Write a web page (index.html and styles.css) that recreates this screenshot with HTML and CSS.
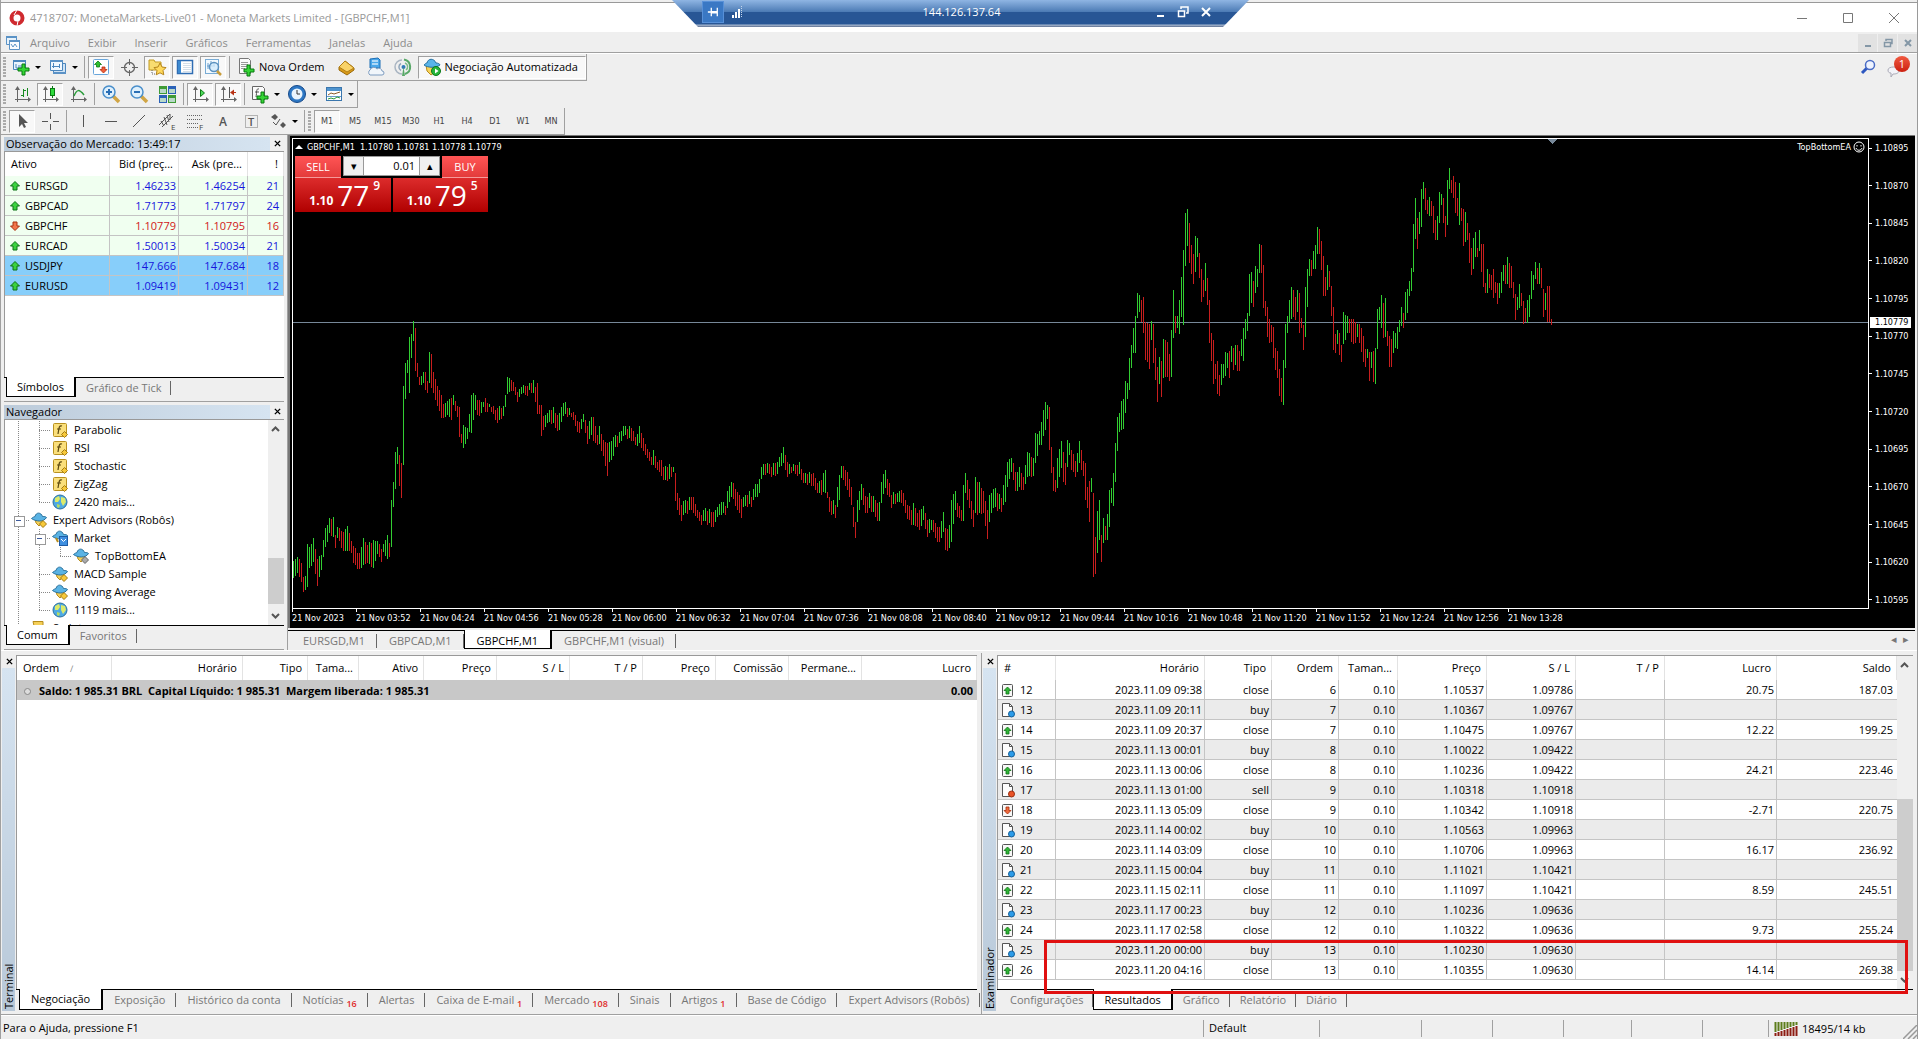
FILE: index.html
```html
<!DOCTYPE html>
<html lang="pt-BR">
<head>
<meta charset="UTF-8">
<meta name="viewport" content="width=device-width, initial-scale=1.0">
<title>4718707: MonetaMarkets-Live01 - Moneta Markets Limited - [GBPCHF,M1]</title>
<link rel="stylesheet" href="styles.css">
</head>
<body>
<svg class="sprite" aria-hidden="true">
<symbol id="i-newchart" viewBox="0 0 20 20"><path d="M2.500 3.500h12v9h-12z" fill="#eaf4fd" stroke="#4b86bd"/><path d="M2 3h13v2H2z" fill="#4b86bd"/><path d="M5 7v4h7M7 9h5" fill="none" stroke="#4b86bd"/><path d="M11 7h3v4h4v3h-4v4h-3v-4H7v-3h4z" fill="#35d435" stroke="#087a10"/></symbol>
<symbol id="i-profiles" viewBox="0 0 20 20"><path d="M5.500 6.500h12v10h-12z" fill="#cfe3f5" stroke="#4b86bd"/><path d="M2.500 3.500h12v10h-12z" fill="#f1f8fe" stroke="#4b86bd"/><path d="M2 3h13v2H2zM5 15h13v2H5z" fill="#5b92c6"/><path d="M5.500 6v5M4 9.500h8M11.500 7v4" stroke="#4b86bd"/></symbol>
<symbol id="i-watch" viewBox="0 0 20 20"><rect x="2.500" y="2.500" width="15" height="15" rx="1" fill="#fff" stroke="#69a6db"/><path d="M7 4l3.500 3.500H8.500V10h-3V7.500h-2z" fill="#2ec02e" stroke="#0b7a14" stroke-width=".8"/><path d="M12.500 16L9 12.500h2V10h3v2.500h2z" fill="#f0603a" stroke="#b32c10" stroke-width=".8"/></symbol>
<symbol id="i-target" viewBox="0 0 20 20"><circle cx="10.500" cy="10.500" r="5" fill="none" stroke="#666" stroke-width="1.300"/><path d="M10.500 2v6M10.500 13v6M2 10.500h6M13 10.500h6" stroke="#666"/></symbol>
<symbol id="i-favfolder" viewBox="0 0 20 20"><path d="M2 3h5l1 2h6v8H2z" fill="#f8dc70" stroke="#c19a22"/><path d="M5 13v4h4" fill="none" stroke="#666" stroke-dasharray="1 1"/><path d="M13 6l2 4 4 .6-3 3 .8 4.200-3.800-2-3.800 2 .8-4.200-3-3 4-.6z" fill="#ffd95c" stroke="#b5851a"/></symbol>
<symbol id="i-panel" viewBox="0 0 20 20"><rect x="2.500" y="3.500" width="15" height="13" fill="#fff" stroke="#2f6db3" stroke-width="1.500"/><path d="M3 4h3v12H3z" fill="#3d8ad0"/><path d="M8 6.500h8M8 8.500h8M8 10.500h8M8 12.500h8M8 14.500h8" stroke="#d5dfe8"/></symbol>
<symbol id="i-tester" viewBox="0 0 20 20"><rect x="2.500" y="2.500" width="13" height="14" fill="#f4fafe" stroke="#79acd5"/><path d="M5 6v6M4 9h8M8 4v5M11 5v4" stroke="#6a9fcc"/><circle cx="11" cy="10" r="4.500" fill="#d3ebfb" fill-opacity=".8" stroke="#5b91bf" stroke-width="1.500"/><path d="M14 14l4 4" stroke="#c99d3b" stroke-width="2.500"/></symbol>
<symbol id="i-order" viewBox="0 0 20 20"><path d="M3.500 1.500h9l2 2v13h-11z" fill="#fbfbfb" stroke="#777"/><path d="M5 5.500h7M5 7.500h7M5 9.500h7M5 11.500h4" stroke="#999"/><path d="M11 8h3v4h4v3h-4v4h-3v-4H8v-3h3z" fill="#35d435" stroke="#087a10"/></symbol>
<symbol id="i-gold" viewBox="0 0 20 20"><path d="M2 10l6-6 9 7v2l-7 5-8-5z" fill="#d99a18" stroke="#9a6a0a"/><path d="M2 10l6-6 9 7-7 4z" fill="#f9d368" stroke="#b27f16"/></symbol>
<symbol id="i-cloud" viewBox="0 0 20 20"><path d="M5 2l8-1 2 2v8H5z" fill="#4aa7ea" stroke="#1d6eb5"/><path d="M7 4h6M7 7h6" stroke="#cfe9fb" stroke-width="1.500"/><path d="M5 18a3 3 0 010-5 4 4 0 017-1 3 3 0 015 2 2 2 0 010 4z" fill="#f1f6fb" stroke="#7d9cc0"/></symbol>
<symbol id="i-signal" viewBox="0 0 20 20"><path d="M9 17a7 7 0 010-14" fill="none" stroke="#a9b5c2" stroke-width="1.500"/><path d="M8 13.500a4 4 0 010-7" fill="none" stroke="#8fa5ba" stroke-width="1.500"/><path d="M11 2.500a7.500 7.500 0 011 14.500" fill="none" stroke="#58a868" stroke-width="2"/><path d="M12 6a4 4 0 011 7" fill="none" stroke="#7dbb89" stroke-width="1.500"/><circle cx="10.500" cy="10" r="2" fill="#3079b9"/><path d="M10.500 10l1.500 9h-3z" fill="#58a868"/></symbol>
<symbol id="i-auto" viewBox="0 0 20 20"><path d="M4 8h11l-2 7-4 3-4-4z" fill="#f7d35c" stroke="#b78c1c"/><path d="M2 8c1-1 2-2 3-2 1-5 7-5 9 0 2 0 4 1 4 2-4 3-12 3-16 0z" fill="#58b4ea" stroke="#246f9f"/><circle cx="14" cy="14" r="4.500" fill="#27b53a" stroke="#0b7a1a"/><path d="M13 11.500l3.500 2.500-3.500 2.500z" fill="#fff"/></symbol>
<symbol id="i-bars" viewBox="0 0 20 20"><path d="M5.500 5v13M3 15.500h15" stroke="#666"/><path d="M5.500 2L3 6h5zM19 15.500L16 13v5z" fill="#666"/><path d="M11.500 5v8M9 11.500h2M12 6.500h2M15.500 4v8" stroke="#168a20"/></symbol>
<symbol id="i-candle" viewBox="0 0 20 20"><path d="M5.500 5v13M3 15.500h15" stroke="#666"/><path d="M5.500 2L3 6h5zM19 15.500L16 13v5z" fill="#666"/><path d="M12.500 2v12" stroke="#0b7a14"/><rect x="10.500" y="4.500" width="4" height="7" fill="#2edb3c" stroke="#0b7a14"/></symbol>
<symbol id="i-line" viewBox="0 0 20 20"><path d="M5.500 5v13M3 15.500h15" stroke="#666"/><path d="M5.500 2L3 6h5zM19 15.500L16 13v5z" fill="#666"/><path d="M6 12c3-7 5-7 10-1" fill="none" stroke="#2a9c3a" stroke-width="1.500"/></symbol>
<symbol id="i-zoomin" viewBox="0 0 20 20"><path d="M12 12l6 6" stroke="#d1a544" stroke-width="3.500"/><circle cx="8" cy="8" r="6" fill="#dff0fc" stroke="#4a8fcb" stroke-width="1.500"/><path d="M5 8h6M8 5v6" stroke="#2a6fb5" stroke-width="2"/></symbol>
<symbol id="i-zoomout" viewBox="0 0 20 20"><path d="M12 12l6 6" stroke="#d1a544" stroke-width="3.500"/><circle cx="8" cy="8" r="6" fill="#dff0fc" stroke="#4a8fcb" stroke-width="1.500"/><path d="M5 8h6" stroke="#2a6fb5" stroke-width="2"/></symbol>
<symbol id="i-tile" viewBox="0 0 20 20"><path d="M2 2h8v8H2zM11 11h8v8h-8z" fill="#3f9b35"/><path d="M11 2h8v8h-8zM2 11h8v8H2z" fill="#2b62b8"/><path d="M3 5h6v4H3zM12 5h6v4h-6zM3 14h6v4H3zM12 14h6v4h-6z" fill="#b9d9c9"/></symbol>
<symbol id="i-scroll" viewBox="0 0 20 20"><path d="M5.500 5v13M3 15.500h15" stroke="#666"/><path d="M5.500 2L3 6h5zM19 15.500L16 13v5z" fill="#666"/><path d="M10.500 5.500l4 3.500-4 3.500z" fill="#4ddb5a" stroke="#0b7a14"/></symbol>
<symbol id="i-shift" viewBox="0 0 20 20"><path d="M5.500 5v13M3 15.500h15" stroke="#666"/><path d="M5.500 2L3 6h5zM19 15.500L16 13v5z" fill="#666"/><path d="M11.500 3v11" stroke="#555"/><path d="M18 8.500h-3" stroke="#b83214"/><path d="M12 8.500l4-3v6z" fill="#b83214"/></symbol>
<symbol id="i-indic" viewBox="0 0 20 20"><path d="M2.500 2.500h10l2 2v11h-12z" fill="#fbfbfb" stroke="#666"/><path d="M9 5c-3-1-2 3-3 8M5 8h4" fill="none" stroke="#555"/><path d="M11 8h3v4h4v3h-4v4h-3v-4H7v-3h4z" fill="#35d435" stroke="#087a10"/></symbol>
<symbol id="i-clock" viewBox="0 0 20 20"><circle cx="10" cy="10" r="8.500" fill="#2d77c4" stroke="#174a8a"/><circle cx="10" cy="10" r="5.500" fill="#e9f4fd"/><path d="M10 6v4h3" fill="none" stroke="#333"/></symbol>
<symbol id="i-template" viewBox="0 0 20 20"><rect x="2.500" y="3.500" width="15" height="13" fill="#fff" stroke="#3a76ad"/><path d="M3 4h14v3H3z" fill="#4f94cf"/><path d="M4 11l3-2 3 1 3-1 3-1" fill="none" stroke="#8a5a2a"/><path d="M3 12.500h14" stroke="#6b9dc8"/><path d="M4 15l3-1 3 1 3-2 3 1" fill="none" stroke="#2a9c3a"/></symbol>
<symbol id="i-pointer" viewBox="0 0 20 20"><path d="M7 3v13l3-3 2 4 2-1-2-4h4z" fill="#555"/></symbol>
<symbol id="i-cross" viewBox="0 0 20 20"><path d="M10.500 2v6M10.500 13v6M2 10.500h6M13 10.500h6" stroke="#555"/></symbol>
<symbol id="i-vline" viewBox="0 0 20 20"><path d="M10.500 4v12" stroke="#555"/></symbol>
<symbol id="i-hline" viewBox="0 0 20 20"><path d="M4 10.500h12" stroke="#555"/></symbol>
<symbol id="i-trend" viewBox="0 0 20 20"><path d="M4 16L16 4" stroke="#555"/></symbol>
<symbol id="i-channel" viewBox="0 0 20 20"><path d="M2 14L13 3M5 16L16 5M4 10l3 5M7 6l3 8M10 4l2 7M13 3v6" stroke="#555" fill="none"/><text x="14" y="19" font-size="8" font-family="Open Sans" fill="#444">E</text></symbol>
<symbol id="i-fibo" viewBox="0 0 20 20"><path d="M2 4.500h16M2 8.500h16M2 12.500h11M2 16.500h11" stroke="#666" stroke-dasharray="1 1"/><text x="14" y="19" font-size="8" font-family="Open Sans" fill="#444">F</text></symbol>
<symbol id="i-text" viewBox="0 0 20 20"><text x="6" y="15" font-size="12" font-family="Open Sans" font-weight="600" fill="#555">A</text></symbol>
<symbol id="i-label" viewBox="0 0 20 20"><path d="M4.500 4.500h12v12h-12z" fill="none" stroke="#777" stroke-dasharray="1 1"/><text x="7" y="15" font-size="11" font-family="Open Sans" font-weight="600" fill="#555">T</text></symbol>
<symbol id="i-arrows" viewBox="0 0 20 20"><path d="M3 6l4-3 3 3-3 3zM12 14l3-3 3 3-3 3z" fill="#555"/><path d="M5 11l3 3 4-6" fill="none" stroke="#555"/></symbol>
<symbol id="i-up" viewBox="0 0 12 12"><path d="M6 1.500l4.500 4.500H8v4H4V6H1.500z" fill="#3bd13f" stroke="#0b7314"/></symbol>
<symbol id="i-down" viewBox="0 0 12 12"><path d="M6 10.500L1.500 6H4V2h4v4h2.500z" fill="#f2764a" stroke="#a8300f"/></symbol>
<symbol id="i-func" viewBox="0 0 16 16"><rect x="1.500" y="1.500" width="13" height="13" rx="1" fill="#fadf7b" stroke="#b9911f"/><path d="M10 4c-3-1-3 2-4 8M5 7h4" fill="none" stroke="#5d4a10" stroke-width="1.200"/><path d="M12.500 9.500L15.500 12.500 12.500 15.500 9.500 12.500z" fill="#f7c93a" stroke="#a47b12"/></symbol>
<symbol id="i-globe" viewBox="0 0 16 16"><circle cx="8" cy="8" r="7" fill="#4ea9e2" stroke="#2a6f9e"/><path d="M3 4l4-2 1 3-2 3H3zM9 3l4 1 1 4-3 4-2-4z" fill="#dcea6a"/><path d="M5 10l3 1-1 3-2-1z" fill="#b5dd60"/></symbol>
<symbol id="i-expert" viewBox="0 0 16 16"><path d="M4 7h8l-1 4-3 3-3-3z" fill="#f4cf58" stroke="#b78c1c"/><path d="M0.500 6.500C2 5 3 5 4 4.500 5 0 10 0 11.500 4.500c2 0 3 0 4 1-3 5-11 4-15 1z" fill="#5ab3e4" stroke="#27709c"/><path d="M12 8.500l3.500 3.500-3.500 3.500L8.500 12z" fill="#f7c93a" stroke="#a47b12"/></symbol>
<symbol id="i-expertgray" viewBox="0 0 16 16"><path d="M4 7h8l-1 4-3 3-3-3z" fill="#f4cf58" stroke="#b78c1c"/><path d="M0.500 6.500C2 5 3 5 4 4.500 5 0 10 0 11.500 4.500c2 0 3 0 4 1-3 5-11 4-15 1z" fill="#5ab3e4" stroke="#27709c"/><path d="M12 8.500l3.500 3.500-3.500 3.500L8.500 12z" fill="#aaa" stroke="#666"/></symbol>
<symbol id="i-market" viewBox="0 0 16 16"><path d="M0.500 6.500C2 5 3 5 4 4.500 5 0 10 0 11.500 4.500c2 0 3 0 4 1-3 5-11 4-15 1z" fill="#5ab3e4" stroke="#27709c"/><path d="M4 8l2 4" stroke="#b78c1c" stroke-width="2"/><rect x="7.500" y="6.500" width="8" height="9" fill="#3f8fe0" stroke="#1d5ba5"/><path d="M9 9l2.500 2.500L14 9" fill="none" stroke="#fff"/></symbol>
<symbol id="i-script" viewBox="0 0 16 16"><path d="M2 1.500h10v4l2 9H5z" fill="#f4cf58" stroke="#b78c1c"/></symbol>
<symbol id="i-close-up" viewBox="0 0 14 16"><rect x="1.500" y="2.500" width="10" height="12" rx="1" fill="#f8f8f8" stroke="#555"/><path d="M6.500 5l3.500 3.500H8V12H5V8.500H3z" fill="#31b436" stroke="#0b7314" stroke-width=".8"/></symbol>
<symbol id="i-close-down" viewBox="0 0 14 16"><rect x="1.500" y="2.500" width="10" height="12" rx="1" fill="#f8f8f8" stroke="#555"/><path d="M6.500 12L3 8.500h2V5h3v3.500h2z" fill="#ef6a3c" stroke="#a8300f" stroke-width=".8"/></symbol>
<symbol id="i-buy" viewBox="0 0 14 16"><path d="M1.500 1.500h7l3 3v10h-10z" fill="#fdfdfd" stroke="#555"/><path d="M8.500 1.500v3h3" fill="none" stroke="#555"/><circle cx="10.500" cy="12" r="3" fill="#2c9be8" stroke="#14629c"/></symbol>
<symbol id="i-sell" viewBox="0 0 14 16"><path d="M1.500 1.500h7l3 3v10h-10z" fill="#fdfdfd" stroke="#555"/><path d="M8.500 1.500v3h3" fill="none" stroke="#555"/><circle cx="10.500" cy="12" r="3" fill="#ea5326" stroke="#9c2f10"/></symbol>
<symbol id="i-chev-up" viewBox="0 0 15 15"><path d="M4 9.500L7.500 6 11 9.500" fill="none" stroke="#555" stroke-width="2"/></symbol>
<symbol id="i-chev-down" viewBox="0 0 15 15"><path d="M4 5.500L7.500 9 11 5.500" fill="none" stroke="#555" stroke-width="2"/></symbol>
<symbol id="i-x" viewBox="0 0 8 8"><path d="M1 1l6 6M7 1L1 7" stroke="#000" stroke-width="1.600"/></symbol>
</svg>

<div class="window">
<header class="titlebar">
<svg class="logo" viewBox="0 0 16 16"><circle cx="8" cy="8" r="5.500" fill="none" stroke="#cf2a2f" stroke-width="4"/><path d="M8 0l-3 5M9 11l-1 5" stroke="#fff" stroke-width="1"/></svg>
<h1>4718707: MonetaMarkets-Live01 - Moneta Markets Limited - [GBPCHF,M1]</h1>
<div class="win-buttons">
<button aria-label="Minimizar"><svg viewBox="0 0 12 12"><path d="M1 6.500h10" stroke="#777"/></svg></button>
<button aria-label="Maximizar"><svg viewBox="0 0 12 12"><path d="M1.500 1.500h9v9h-9z" fill="none" stroke="#777"/></svg></button>
<button aria-label="Fechar"><svg viewBox="0 0 12 12"><path d="M1 1l10 10M11 1L1 11" stroke="#777"/></svg></button>
</div>
</header>

<div class="remote-bar">
<button class="pin" aria-label="Fixar"><svg viewBox="0 0 14 12"><path d="M1 6h4M5 1v10M12 1v10M5 5.500h7M5 7h7" stroke="#fff" stroke-width="1.500"/></svg></button>
<svg class="strength" viewBox="0 0 12 12"><path d="M1 9h2v3H1zM4 6h2v6H4zM7 3h2v9H7z" fill="#fff"/><path d="M10.500 0v12" stroke="#c5d5ea" stroke-dasharray="1 1"/></svg>
<span>144.126.137.64</span>
<div class="remote-buttons">
<button aria-label="Minimizar sessão"><svg viewBox="0 0 12 12"><path d="M3 10h7" stroke="#fff" stroke-width="2"/></svg></button>
<button aria-label="Restaurar sessão"><svg viewBox="0 0 12 12"><path d="M4 3V1h7v6H9M1.500 5h6v5.500h-6z" fill="none" stroke="#fff" stroke-width="1.500"/></svg></button>
<button aria-label="Fechar sessão"><svg viewBox="0 0 12 12"><path d="M2 2l8 8M10 2l-8 8" stroke="#fff" stroke-width="2"/></svg></button>
</div>
</div>

<nav class="menubar">
<svg class="menu-icon" viewBox="0 0 16 16"><path d="M1.500 1.500h10v8h-10z" fill="#e9f3fb" stroke="#5b93c6"/><path d="M4.500 5.500h10v9h-10z" fill="#f8fcff" stroke="#5b93c6"/><path d="M1 1h11v2H1zM4 5h11v2H4z" fill="#5b93c6"/><path d="M6 9l2 3 2-3 2 3" fill="none" stroke="#5b93c6"/></svg>
<button>Arquivo</button><button>Exibir</button><button>Inserir</button><button>Gráficos</button><button>Ferramentas</button><button>Janelas</button><button>Ajuda</button>
<div class="child-buttons">
<button aria-label="Minimizar gráfico"><svg viewBox="0 0 10 10"><path d="M2 8h6" stroke="#8497a6" stroke-width="2"/></svg></button>
<button aria-label="Restaurar gráfico"><svg viewBox="0 0 10 10"><path d="M3 3V1.500h6v4H7.500M1.500 4.500h6v4h-6z" fill="none" stroke="#8497a6" stroke-width="1.500"/></svg></button>
<button aria-label="Fechar gráfico"><svg viewBox="0 0 10 10"><path d="M2 2l6 6M8 2L2 8" stroke="#8497a6" stroke-width="2"/></svg></button>
</div>
</nav>

<div class="toolbars">
<div class="toolbar-stack">
<div class="toolbar">
<i class="grip"></i>
<button class="drop" aria-label="Novo gráfico"><svg><use href="#i-newchart"/></svg></button>
<button class="drop" aria-label="Perfis"><svg><use href="#i-profiles"/></svg></button>
<i class="sep"></i>
<button class="on" aria-label="Observação do Mercado"><svg><use href="#i-watch"/></svg></button>
<button aria-label="Janela de dados"><svg><use href="#i-target"/></svg></button>
<button class="on" aria-label="Navegador"><svg><use href="#i-favfolder"/></svg></button>
<button class="on" aria-label="Terminal"><svg><use href="#i-panel"/></svg></button>
<button class="on" aria-label="Testador"><svg><use href="#i-tester"/></svg></button>
<i class="sep"></i>
<button class="wide"><svg><use href="#i-order"/></svg>Nova Ordem</button>
<button aria-label="MetaEditor"><svg><use href="#i-gold"/></svg></button>
<button aria-label="VPS"><svg><use href="#i-cloud"/></svg></button>
<button aria-label="Sinais"><svg><use href="#i-signal"/></svg></button>
<button class="wide on"><svg><use href="#i-auto"/></svg>Negociação Automatizada</button>
</div>
<div class="toolbar">
<i class="grip"></i>
<button aria-label="Barras"><svg><use href="#i-bars"/></svg></button>
<button class="on" aria-label="Candles"><svg><use href="#i-candle"/></svg></button>
<button aria-label="Linha"><svg><use href="#i-line"/></svg></button>
<i class="sep"></i>
<button aria-label="Mais zoom"><svg><use href="#i-zoomin"/></svg></button>
<button aria-label="Menos zoom"><svg><use href="#i-zoomout"/></svg></button>
<button aria-label="Lado a lado"><svg><use href="#i-tile"/></svg></button>
<i class="sep"></i>
<button class="on" aria-label="Rolagem automática"><svg><use href="#i-scroll"/></svg></button>
<button class="on" aria-label="Deslocar gráfico"><svg><use href="#i-shift"/></svg></button>
<i class="sep"></i>
<button class="drop" aria-label="Indicadores"><svg><use href="#i-indic"/></svg></button>
<button class="drop" aria-label="Períodos"><svg><use href="#i-clock"/></svg></button>
<button class="drop" aria-label="Modelos"><svg><use href="#i-template"/></svg></button>
</div>
<div class="toolbar">
<i class="grip"></i>
<button class="on" aria-label="Cursor"><svg><use href="#i-pointer"/></svg></button>
<button aria-label="Mira"><svg><use href="#i-cross"/></svg></button>
<i class="sep"></i>
<button aria-label="Linha vertical"><svg><use href="#i-vline"/></svg></button>
<button aria-label="Linha horizontal"><svg><use href="#i-hline"/></svg></button>
<button aria-label="Linha de tendência"><svg><use href="#i-trend"/></svg></button>
<button aria-label="Canal"><svg><use href="#i-channel"/></svg></button>
<button aria-label="Fibonacci"><svg><use href="#i-fibo"/></svg></button>
<button aria-label="Texto"><svg><use href="#i-text"/></svg></button>
<button aria-label="Etiqueta"><svg><use href="#i-label"/></svg></button>
<button class="drop" aria-label="Setas"><svg><use href="#i-arrows"/></svg></button>
<i class="sep"></i>
<i class="grip"></i>
<button class="tf on">M1</button><button class="tf">M5</button><button class="tf">M15</button><button class="tf">M30</button><button class="tf">H1</button><button class="tf">H4</button><button class="tf">D1</button><button class="tf">W1</button><button class="tf">MN</button>
</div>
</div>
<div class="toolbar-right">
<button aria-label="Pesquisar"><svg viewBox="0 0 16 16"><path d="M2 14l5-5" stroke="#2d57c0" stroke-width="3"/><circle cx="10" cy="6" r="4.500" fill="#eef3ff" stroke="#4a6cc5" stroke-width="1.500"/></svg></button>
<button class="alerts" aria-label="Notificações"><svg viewBox="0 0 16 16"><path d="M2 8c0-4 11-4 11 0s-4 4-6 4l-2 3v-4c-2 0-3-1-3-3z" fill="#f3f3f8" stroke="#a9a9b5"/></svg><b>1</b></button>
</div>
</div>

<main class="workspace">
<aside class="dock">
<section class="panel">
<div class="panel-title"><h2>Observação do Mercado: 13:49:17</h2><button aria-label="Fechar"><svg><use href="#i-x"/></svg></button></div>
<div class="panel-body">
<table class="quotes">
<colgroup><col class="c-symbol"><col class="c-price"><col class="c-price"><col></colgroup>
<thead><tr><th>Ativo</th><th>Bid (preç...</th><th>Ask (pre...</th><th>!</th></tr></thead>
<tbody id="quotes"></tbody>
</table>
</div>
<div class="tabs"><button class="active">Símbolos</button><button>Gráfico de Tick</button></div>
</section>
<section class="panel nav-panel">
<div class="panel-title"><h2>Navegador</h2><button aria-label="Fechar"><svg><use href="#i-x"/></svg></button></div>
<div class="panel-body tree-body">
<ul class="tree">
<li><i class="v"></i><i class="t"></i><svg><use href="#i-func"/></svg>Parabolic</li>
<li><i class="v"></i><i class="t"></i><svg><use href="#i-func"/></svg>RSI</li>
<li><i class="v"></i><i class="t"></i><svg><use href="#i-func"/></svg>Stochastic</li>
<li><i class="v"></i><i class="t"></i><svg><use href="#i-func"/></svg>ZigZag</li>
<li><i class="v"></i><i class="l"></i><svg><use href="#i-globe"/></svg>2420 mais...</li>
<li><i class="t box"></i><svg><use href="#i-expert"/></svg>Expert Advisors (Robôs)</li>
<li><i class="v"></i><i class="t box"></i><svg><use href="#i-market"/></svg>Market</li>
<li><i class="v"></i><i class="v"></i><i class="l"></i><svg><use href="#i-expertgray"/></svg>TopBottomEA</li>
<li><i class="v"></i><i class="t"></i><svg><use href="#i-expert"/></svg>MACD Sample</li>
<li><i class="v"></i><i class="t"></i><svg><use href="#i-expert"/></svg>Moving Average</li>
<li><i class="v"></i><i class="l"></i><svg><use href="#i-globe"/></svg>1119 mais...</li>
<li><i class="v"></i><svg><use href="#i-script"/></svg>Scripts</li>
</ul>
<div class="scrollbar"><svg><use href="#i-chev-up"/></svg><div class="track nav-track"><div class="thumb"></div></div><svg><use href="#i-chev-down"/></svg></div>
</div>
<div class="tabs"><button class="active">Comum</button><button>Favoritos</button></div>
</section>
</aside>

<section class="chart-area">
<div class="chart">
<div class="chart-main">
<div class="plot">
<svg id="candles"></svg>
<p class="chart-title">GBPCHF,M1&nbsp; 1.10780 1.10781 1.10778 1.10779</p>
<p class="chart-ea">TopBottomEA <svg viewBox="0 0 12 12"><circle cx="6" cy="6" r="5" fill="none" stroke="#fff"/><path d="M4 4v1.500M8 4v1.500M3 7c1 3 5 3 6 0" fill="none" stroke="#fff"/></svg></p>
<div class="trade">
<div class="trade-top">
<button class="side">SELL</button>
<div class="spin"><button aria-label="Diminuir volume">▾</button><input type="text" aria-label="Volume" value="0.01"><button aria-label="Aumentar volume">▴</button></div>
<button class="side">BUY</button>
</div>
<div class="trade-prices">
<button><b>1.10</b><span>77</span><sup>9</sup></button>
<button><b>1.10</b><span>79</span><sup>5</sup></button>
</div>
</div>
</div>
<div class="price-axis">
<div class="prices"><span>1.10895</span><span>1.10870</span><span>1.10845</span><span>1.10820</span><span>1.10795</span><span>1.10770</span><span>1.10745</span><span>1.10720</span><span>1.10695</span><span>1.10670</span><span>1.10645</span><span>1.10620</span><span>1.10595</span></div>
<div class="current">1.10779</div>
</div>
</div>
<div class="time-axis" id="times"></div>
</div>
<div class="tabs chart-tabs"><button>EURSGD,M1</button><button>GBPCAD,M1</button><button class="active">GBPCHF,M1</button><button>GBPCHF,M1 (visual)</button><span class="tab-scroll">◂ &nbsp;▸</span></div>
</section>
</main>

<div class="bottom">
<section class="strip-panel terminal">
<div class="strip"><button aria-label="Fechar Terminal"><svg><use href="#i-x"/></svg></button><h2>Terminal</h2></div>
<div class="strip-content">
<div class="panel-body">
<table class="grid orders">
<colgroup><col class="w95"><col class="w131"><col class="w65"><col class="w51"><col class="w65"><col class="w73"><col class="w73"><col class="w73"><col class="w73"><col class="w73"><col class="w73"><col></colgroup>
<thead><tr><th class="left">Ordem <small>∕</small></th><th>Horário</th><th>Tipo</th><th>Tama...</th><th>Ativo</th><th>Preço</th><th>S / L</th><th>T / P</th><th>Preço</th><th>Comissão</th><th>Permane...</th><th>Lucro</th></tr></thead>
<tbody><tr class="balance"><td colspan="11"><i class="dot"></i>Saldo: 1 985.31 BRL&nbsp; Capital Líquido: 1 985.31&nbsp; Margem liberada: 1 985.31</td><td>0.00</td></tr></tbody>
</table>
</div>
<div class="tabs"><button class="active">Negociação</button><button>Exposição</button><button>Histórico da conta</button><button>Notícias <small>16</small></button><button>Alertas</button><button>Caixa de E-mail <small>1</small></button><button>Mercado <small>108</small></button><button>Sinais</button><button>Artigos <small>1</small></button><button>Base de Código</button><button>Expert Advisors (Robôs)</button></div>
</div>
</section>
<section class="strip-panel tester">
<div class="strip"><button aria-label="Fechar Examinador"><svg><use href="#i-x"/></svg></button><h2>Examinador</h2></div>
<div class="strip-content">
<div class="panel-body tester-body">
<table class="grid results">
<colgroup><col class="w58"><col class="w149"><col class="w67"><col class="w67"><col class="w59"><col class="w89"><col class="w89"><col class="w89"><col class="w112"><col></colgroup>
<thead><tr><th class="left">#</th><th>Horário</th><th>Tipo</th><th>Ordem</th><th>Taman...</th><th>Preço</th><th>S / L</th><th>T / P</th><th>Lucro</th><th>Saldo</th></tr></thead>
<tbody id="results"></tbody>
</table>
<div class="scrollbar"><svg><use href="#i-chev-up"/></svg><div class="track tester-track"><div class="thumb"></div></div><svg><use href="#i-chev-down"/></svg></div>
</div>
<div class="tabs"><button>Configurações</button><button class="active">Resultados</button><button>Gráfico</button><button>Relatório</button><button>Diário</button></div>
</div>
<div class="highlight"></div>
</section>
</div>

<footer class="statusbar">
<span class="help">Para o Ajuda, pressione F1</span>
<span class="s116">Default</span><span class="s102"></span><span class="s71"></span><span class="s71"></span><span class="s68"></span><span class="s71"></span><span class="s66"></span>
<span class="traffic"><svg viewBox="0 0 24 14"><path d="M1.500 0v10M4.500 0v9M7.500 0v8M10.500 0v7M13.500 0v6M16.500 0v5M19.500 0v4M22.500 0v3" stroke="#5d7d1c" stroke-width="2"/><path d="M1.500 11v3M4.500 10v4M7.500 9v5M10.500 8v6M13.500 7v7M16.500 6v8M19.500 5v9M22.500 4v10" stroke="#8d1c12" stroke-width="2"/></svg>18495/14 kb</span>
<svg class="resize" viewBox="0 0 14 14"><path d="M0 14L14 0M5 14l9-9M10 14l4-4" stroke="#999" stroke-width="1.500"/></svg>
</footer>
</div>
<script src="script.js"></script>
</body>
</html>
```
FILE: styles.css
```css
* {
box-sizing: border-box;
}
body {
margin: 0;
height: 100vh;
overflow: hidden;
background: #fff;
color: #000;
font-family: "Open Sans", "Noto Sans", sans-serif;
font-size: 11px;
line-height: 16px;
}
h1, h2, p, ul {
margin: 0;
padding: 0;
font-size: 11px;
font-weight: normal;
}
button {
border: none;
padding: 0;
background: none;
color: inherit;
font: inherit;
}
svg {
display: block;
flex: none;
}
.sprite {
position: absolute;
width: 0;
height: 0;
}
.window {
position: relative;
display: flex;
flex-direction: column;
height: 100vh;
padding-top: 2px;
margin-right: 1px;
border-right: 1px solid #9a9a9a;
border-left: 1px solid #a0a0a0;
background: #efefef;
}

/* title and menu */
.titlebar {
display: flex;
align-items: center;
height: 30px;
flex: none;
padding-left: 8px;
border-top: 1px solid #999;
background: #fff;
color: #999;
}
.logo {
width: 16px;
height: 16px;
margin-right: 5px;
}
.win-buttons {
display: flex;
margin-left: auto;
}
.win-buttons button {
display: flex;
justify-content: center;
width: 46px;
}
.win-buttons svg {
width: 12px;
height: 12px;
}
.remote-bar {
position: absolute;
top: 0;
left: 671px;
width: 577px;
height: 27px;
display: flex;
align-items: center;
padding: 0 37px 3px 30px;
background: linear-gradient(#8fb5e3, #4b7ab4 12px, #285695 12px, #285695 24px, #a9bad2 25px, #5c6f90 27px);
clip-path: polygon(0 0, 100% 0, calc(100% - 26px) 100%, 26px 100%);
color: #fff;
}
.remote-bar svg {
width: 12px;
height: 12px;
}
.remote-bar .pin {
display: flex;
justify-content: center;
align-items: center;
width: 22px;
height: 22px;
border: 1px solid #5790d8;
background: #3a78c4;
}
.remote-bar .strength {
margin-left: 7px;
}
.remote-bar span {
margin: 0 auto;
padding-left: 26px;
}
.remote-buttons {
display: flex;
gap: 11px;
}
.menubar {
display: flex;
align-items: center;
flex: none;
height: 22px;
padding-left: 4px;
border-bottom: 1px solid #fff;
box-shadow: inset 0 -1px 0 #a0a0a0;
color: #8c8c8c;
}
.menubar > button {
padding: 0 9px;
}
.menu-icon {
width: 16px;
height: 16px;
}
.child-buttons {
display: flex;
gap: 1px;
margin-left: auto;
}
.child-buttons button {
display: flex;
justify-content: center;
align-items: center;
width: 19px;
height: 18px;
background: #e2e2e2;
}
.child-buttons svg {
width: 10px;
height: 10px;
}

/* toolbars */
.toolbars {
display: flex;
justify-content: space-between;
flex: none;
}
.toolbar {
display: flex;
align-items: center;
gap: 2px;
width: max-content;
height: 27px;
padding-left: 2px;
border-right: 1px solid #a0a0a0;
border-bottom: 1px solid #a0a0a0;
}
.toolbar button {
display: flex;
align-items: center;
justify-content: center;
width: 26px;
height: 23px;
}
.toolbar svg {
width: 20px;
height: 20px;
}
.toolbar .on {
border: 1px solid #a0a0a0;
border-right-color: #fff;
border-bottom-color: #fff;
background: #f8f8f8;
}
.toolbar .drop {
width: 35px;
justify-content: flex-start;
padding-left: 2px;
gap: 4px;
}
.drop::after {
content: "";
border: 3px solid transparent;
border-top-color: #000;
border-bottom: none;
}
.toolbar .wide {
width: auto;
padding: 0 7px 0 3px;
gap: 3px;
}
.toolbar .tf {
font: 9px "DejaVu Sans Condensed", "Open Sans", sans-serif;
color: #444;
}
.grip {
width: 3px;
height: 21px;
margin-right: 1px;
background: repeating-linear-gradient(#aaa 0 2px, #efefef 2px 3px);
}
.sep {
width: 1px;
height: 22px;
margin: 0 1px;
background: #a0a0a0;
}
.toolbar-right {
display: flex;
gap: 10px;
padding: 5px 7px 0 0;
align-items: flex-start;
}
.toolbar-right svg {
width: 16px;
height: 16px;
}
.alerts {
position: relative;
width: 24px;
}
.alerts svg {
margin-top: 3px;
}
.alerts b {
position: absolute;
top: -3px;
right: 0;
width: 16px;
height: 16px;
border-radius: 50%;
background: linear-gradient(#f05a40, #cc2010);
color: #fff;
font-weight: normal;
}

/* docked panels */
.workspace {
display: flex;
flex: 1;
min-height: 0;
}
.dock {
display: flex;
flex-direction: column;
width: 287px;
padding: 1px 3px 0 3px;
border-right: 1px solid #a0a0a0;
}
.panel {
display: flex;
flex-direction: column;
height: 266px;
padding-bottom: 3px;
border-bottom: 1px solid #a0a0a0;
}
.nav-panel {
flex: 1;
min-height: 0;
padding-top: 2px;
}
.panel-title {
display: flex;
flex: none;
align-items: center;
height: 15px;
}
.panel-title h2 {
flex: 1;
padding-left: 2px;
line-height: 14px;
background: linear-gradient(90deg, #bccbda, #d6e4f1);
}
.panel-title button, .strip button {
display: flex;
align-items: center;
justify-content: center;
width: 14px;
height: 13px;
}
.panel-title svg, .strip svg {
width: 7px;
height: 7px;
}
.panel-body {
flex: 1;
min-height: 0;
overflow: hidden;
border-top: 1px solid #999;
border-left: 1px solid #999;
background: #fff;
}
table {
width: 100%;
table-layout: fixed;
border-collapse: separate;
border-spacing: 0;
}
th {
height: 24px;
padding: 0 5px 0 0;
border-right: 1px solid #e3e3e3;
font-weight: normal;
text-align: right;
white-space: nowrap;
}
td {
height: 20px;
padding: 0 2px 0 0;
border-right: 1px solid #c4c4c4;
border-bottom: 1px solid #c4c4c4;
line-height: 19px;
text-align: right;
white-space: nowrap;
}
.c-symbol {
width: 105px;
}
.c-price {
width: 69px;
}
.quotes th:first-child, .left {
padding-left: 6px;
text-align: left;
}
.quotes td {
background: #f0fff0;
color: #1616dc;
}
.quotes td:last-child {
padding-right: 4px;
}
.quotes .down td {
color: #d01818;
}
.quotes .picked td {
background: #87cefa;
}
.quotes tr td:first-child {
color: #000;
}
.cell {
display: flex;
align-items: center;
gap: 4px;
padding-left: 4px;
}
.cell svg {
width: 12px;
height: 12px;
}
.tabs {
display: flex;
flex: none;
height: 21px;
padding-left: 2px;
border-top: 1px solid #000;
color: #777;
}
.tabs button {
position: relative;
padding: 0 10px;
margin-bottom: 1px;
line-height: 18px;
white-space: nowrap;
}
.tabs button:not(.active)::after {
content: "";
position: absolute;
top: 3px;
right: 0;
height: 14px;
border-right: 1px solid #666;
}
.tabs .active {
margin-top: -1px;
padding-top: 1px;
border: 1px solid #000;
border-top: none;
border-right-width: 2px;
background: #fff;
color: #000;
}
.tabs small {
position: relative;
top: 3px;
font-size: 9px;
font-weight: 600;
color: #e02828;
}
.tree-body {
display: flex;
}
.tree {
flex: 1;
list-style: none;
padding: 1px 0 0 3px;
}
.tree li {
display: flex;
align-items: center;
height: 18px;
white-space: nowrap;
}
.tree svg {
width: 16px;
height: 16px;
margin: 0 6px 0 2px;
}
.tree i {
position: relative;
width: 21px;
height: 18px;
background: repeating-linear-gradient(#888 0 1px, transparent 1px 2px) 10px 0 / 1px 100% no-repeat;
}
.tree .t, .tree .l {
background: repeating-linear-gradient(#888 0 1px, transparent 1px 2px) 10px 0 / 1px 100% no-repeat, repeating-linear-gradient(90deg, #888 0 1px, transparent 1px 2px) 10px 9px / 11px 1px no-repeat;
}
.tree .l {
background-size: 1px 10px, 11px 1px;
}
.tree .box::after {
content: "";
position: absolute;
left: 6px;
top: 5px;
width: 9px;
height: 9px;
border: 1px solid #999;
background: linear-gradient(#3c5a9a, #3c5a9a) 1px 3px / 5px 1px no-repeat #fff;
}
.scrollbar {
display: flex;
flex-direction: column;
flex: none;
width: 16px;
background: #efefef;
}
.scrollbar svg {
width: 15px;
height: 18px;
}
.track {
display: flex;
flex: 1;
flex-direction: column;
justify-content: flex-end;
}
.thumb {
background: #cdcdcd;
}
.nav-track .thumb {
height: 46px;
margin-bottom: 3px;
}
.tester-track .thumb {
height: 172px;
}

/* chart */
.chart-area {
display: flex;
flex: 1;
flex-direction: column;
min-width: 0;
padding-right: 2px;
}
.chart {
display: flex;
flex: 1;
flex-direction: column;
min-height: 0;
overflow: hidden;
padding: 2px 0 0 2px;
border-top: 1px solid #777;
border-left: 2px solid #777;
background: #000;
color: #fff;
font: 9px/12px "DejaVu Sans Condensed", "Open Sans", sans-serif;
}
.chart p {
font-size: 9px;
}
.chart-main {
display: flex;
height: 471px;
}
.plot {
position: relative;
flex: 1;
border: 1px solid #fff;
}
#candles {
width: 100%;
height: 469px;
shape-rendering: crispEdges;
}
.chart-title {
position: absolute;
top: 2px;
left: 14px;
}
.chart-title::before {
content: "";
position: absolute;
left: -12px;
top: 4px;
border: 4px solid transparent;
border-bottom-color: #fff;
border-top: none;
}
.chart-ea {
position: absolute;
top: 2px;
right: 3px;
display: flex;
align-items: center;
gap: 2px;
}
.chart-ea svg {
width: 12px;
height: 12px;
}
.price-axis {
position: relative;
width: 46px;
}
.prices {
display: flex;
flex-direction: column;
justify-content: space-between;
height: 100%;
padding: 4px 0 3px;
}
.prices span {
display: flex;
align-items: center;
gap: 3px;
}
.prices span::before {
content: "";
width: 3px;
height: 1px;
background: #fff;
}
.current {
position: absolute;
top: 179px;
left: 1px;
right: 4px;
height: 11px;
padding-left: 5px;
background: #fff;
color: #000;
line-height: 11px;
}
.time-axis {
display: flex;
}
.time-axis span {
flex: none;
width: 64px;
white-space: nowrap;
}
.time-axis span::before {
content: "";
display: block;
width: 1px;
height: 3px;
background: #fff;
}
.chart-tabs {
height: 20px;
margin-top: 2px;
padding-left: 3px;
}
.chart-tabs button {
padding: 0 12px;
line-height: 19px;
}
.tab-scroll {
margin-left: auto;
padding-right: 6px;
}

/* one click trading */
.trade {
position: absolute;
top: 17px;
left: 2px;
width: 193px;
font: 11px/16px "Open Sans", "Noto Sans", sans-serif;
}
.trade-top {
display: flex;
}
.side {
width: 46px;
height: 22px;
background: linear-gradient(#ff5555, #e23a3a);
box-shadow: inset 0 -1px 0 #f59a9a;
color: #fff;
}
.spin {
display: flex;
flex: 1;
height: 20px;
margin: 0 2px;
border: 1px solid #999;
background: #fff;
}
.spin button {
width: 19px;
background: #f0f0f0;
color: #000;
}
.spin input {
flex: 1;
width: 20px;
border: solid #999;
border-width: 0 1px;
padding: 0 4px 0 0;
font: inherit;
text-align: right;
}
.trade-prices {
display: flex;
gap: 2px;
}
.trade-prices button {
display: flex;
flex: 1;
align-items: flex-end;
justify-content: center;
gap: 4px;
height: 34px;
padding: 0 0 3px 4px;
background: linear-gradient(#dd2c2c, #b00000);
color: #fff;
}
.trade-prices b {
font-size: 12px;
}
.trade-prices span {
font-size: 28px;
line-height: 28px;
}
.trade-prices sup {
align-self: flex-start;
font-size: 12px;
font-weight: 600;
line-height: 16px;
}

/* terminal and tester */
.bottom {
display: flex;
flex: none;
height: 365px;
padding-top: 2px;
border-top: 1px solid #fff;
border-bottom: 1px solid #a0a0a0;
}
.strip-panel {
position: relative;
display: flex;
padding: 2px 4px 3px 1px;
}
.terminal {
width: 981px;
border-right: 1px solid #a0a0a0;
}
.tester {
flex: 1;
min-width: 0;
}
.strip {
display: flex;
flex-direction: column;
flex: none;
width: 14px;
}
.strip h2 {
flex: 1;
margin-right: 1px;
background: linear-gradient(#b8c8d8, #d6e4f1);
line-height: 13px;
writing-mode: vertical-rl;
transform: rotate(180deg);
padding-top: 2px;
}
.strip-content {
display: flex;
flex: 1;
flex-direction: column;
min-width: 0;
}
.strip-content .tabs {
height: 22px;
padding-left: 3px;
}
.terminal .tabs button {
padding: 0 11px;
}
.w51 { width: 51px; }
.w58 { width: 58px; }
.w59 { width: 59px; }
.w65 { width: 65px; }
.w67 { width: 67px; }
.w73 { width: 73px; }
.w89 { width: 89px; }
.w95 { width: 95px; }
.w112 { width: 112px; }
.w131 { width: 131px; }
.w149 { width: 149px; }
th small {
padding-left: 8px;
font-size: 9px;
color: #888;
}
.balance td {
padding-right: 4px;
border: none;
background: #c8c8c8;
font-weight: 700;
}
.balance td:first-child {
padding-left: 7px;
text-align: left;
}
.dot {
display: inline-block;
width: 7px;
height: 7px;
margin-right: 8px;
border: 1px solid #888;
border-radius: 50%;
background: #ddd;
}
.tester-body {
display: flex;
}
.results {
flex: 1;
align-self: flex-start;
}
.results tr:nth-child(even) td {
background: #ebebeb;
}
.results td:last-child {
padding-right: 4px;
border-right: none;
}
.results .cell {
gap: 5px;
padding-left: 3px;
}
.results .cell svg {
width: 14px;
height: 16px;
}
.highlight {
position: absolute;
left: 62px;
right: 9px;
bottom: 20px;
height: 54px;
border: 3px solid #e01010;
}

/* status bar */
.statusbar {
position: relative;
display: flex;
flex: none;
height: 24px;
padding: 4px 0 2px;
border-top: 1px solid #fff;
}
.statusbar span {
flex: none;
padding-left: 5px;
border-left: 1px solid #a0a0a0;
}
.statusbar .help {
flex: 1;
padding-left: 2px;
border: none;
}
.s66 { width: 66px; }
.s68 { width: 68px; }
.s71 { width: 71px; }
.s102 { width: 102px; }
.s116 { width: 116px; }
.statusbar .traffic {
display: flex;
align-items: center;
gap: 4px;
width: 149px;
}
.traffic svg {
width: 24px;
height: 14px;
}
.resize {
position: absolute;
right: 0;
bottom: 0;
width: 14px;
height: 14px;
}
```
FILE: script.js
```js
const quotes = [
['EURSGD', '1.46233', '1.46254', 21, 'up'],
['GBPCAD', '1.71773', '1.71797', 24, 'up'],
['GBPCHF', '1.10779', '1.10795', 16, 'down'],
['EURCAD', '1.50013', '1.50034', 21, 'up'],
['USDJPY', '147.666', '147.684', 18, 'up', 'picked'],
['EURUSD', '1.09419', '1.09431', 12, 'up', 'picked']
];

document.getElementById('quotes').innerHTML = quotes.map(q =>
`<tr class="${q[4]} ${q[5] || ''}"><td><div class="cell"><svg><use href="#i-${q[4]}"/></svg>${q[0]}</div></td><td>${q[1]}</td><td>${q[2]}</td><td>${q[3]}</td></tr>`
).join('');

const results = [
[12, '2023.11.09 09:38', 'close', 6, '1.10537', '1.09786', '20.75', '187.03'],
[13, '2023.11.09 20:11', 'buy', 7, '1.10367', '1.09767', '', ''],
[14, '2023.11.09 20:37', 'close', 7, '1.10475', '1.09767', '12.22', '199.25'],
[15, '2023.11.13 00:01', 'buy', 8, '1.10022', '1.09422', '', ''],
[16, '2023.11.13 00:06', 'close', 8, '1.10236', '1.09422', '24.21', '223.46'],
[17, '2023.11.13 01:00', 'sell', 9, '1.10318', '1.10918', '', ''],
[18, '2023.11.13 05:09', 'close', 9, '1.10342', '1.10918', '-2.71', '220.75'],
[19, '2023.11.14 00:02', 'buy', 10, '1.10563', '1.09963', '', ''],
[20, '2023.11.14 03:09', 'close', 10, '1.10706', '1.09963', '16.17', '236.92'],
[21, '2023.11.15 00:04', 'buy', 11, '1.11021', '1.10421', '', ''],
[22, '2023.11.15 02:11', 'close', 11, '1.11097', '1.10421', '8.59', '245.51'],
[23, '2023.11.17 00:23', 'buy', 12, '1.10236', '1.09636', '', ''],
[24, '2023.11.17 02:58', 'close', 12, '1.10322', '1.09636', '9.73', '255.24'],
[25, '2023.11.20 00:00', 'buy', 13, '1.10230', '1.09630', '', ''],
[26, '2023.11.20 04:16', 'close', 13, '1.10355', '1.09630', '14.14', '269.38']
];

function resultIcon(row) {
if (row[2] !== 'close') return row[2];
return row[6].startsWith('-') ? 'close-down' : 'close-up';
}

document.getElementById('results').innerHTML = results.map(r =>
`<tr><td><div class="cell"><svg><use href="#i-${resultIcon(r)}"/></svg>${r[0]}</div></td><td>${r[1]}</td><td>${r[2]}</td><td>${r[3]}</td><td>0.10</td><td>${r[4]}</td><td>${r[5]}</td><td></td><td>${r[6]}</td><td>${r[7]}</td></tr>`
).join('');

// time axis, one label every 32 bars
let labels = '<span>21 Nov 2023</span>';
for (let m = 232; m <= 808; m += 32) {
const hh = String(Math.floor(m / 60)).padStart(2, '0');
const mm = String(m % 60).padStart(2, '0');
labels += `<span>21 Nov ${hh}:${mm}</span>`;
}
document.getElementById('times').innerHTML = labels;

// bar index, high, low
const bars = [
0,422,439, 2,418,434, 4,424,443, 5,438,453, 6,437,451, 7,405,448, 8,408,429, 10,399,423, 12,420,447, 14,416,431,
16,389,408, 18,379,394, 20,378,398, 21,396,409, 22,388,399, 25,393,412, 27,387,412, 29,402,414, 30,407,424, 33,414,430,
35,399,426, 37,406,424, 40,401,429, 42,402,415, 44,410,423, 45,405,413, 47,396,420, 48,404,418, 49,361,408, 50,343,368,
51,313,350, 52,308,325, 53,316,347, 54,324,359, 55,247,326, 56,224,260, 57,221,234, 58,198,254, 59,195,219, 60,182,202,
61,189,232, 62,224,238, 63,238,246, 65,233,244, 66,233,251, 67,242,254, 68,213,244, 69,215,249, 70,233,254, 72,247,267,
74,256,279, 75,265,279, 77,262,276, 79,259,281, 80,256,266, 82,267,278, 83,268,298, 84,295,304, 85,286,309, 87,289,300,
88,275,293, 89,256,294, 91,256,271, 93,261,277, 95,263,268, 96,259,273, 98,265,268, 101,271,281, 102,269,284, 105,267,277,
106,256,268, 107,238,255, 109,241,252, 111,248,256, 112,253,263, 114,248,255, 117,247,257, 118,244,251, 120,241,254, 121,248,263,
122,244,275, 123,266,275, 124,266,297, 125,277,291, 127,274,284, 130,268,284, 131,274,289, 133,274,291, 134,268,283, 136,263,275,
139,274,278, 141,276,287, 143,283,294, 145,275,283, 147,287,305, 149,278,296, 150,278,302, 152,296,306, 153,287,305, 155,301,317,
157,304,337, 158,303,323, 160,298,317, 161,296,308, 163,293,304, 166,287,296, 169,289,302, 171,298,306, 173,287,304, 175,299,312,
177,310,319, 179,318,326, 180,311,326, 182,323,331, 184,321,337, 185,328,341, 188,325,340, 190,328,333, 191,334,362, 192,354,371,
194,366,382, 196,361,374, 199,358,371, 200,358,374, 202,371,379, 204,376,386, 206,369,382, 210,373,388, 212,368,378, 214,363,376,
216,367,376, 217,352,369, 219,343,358, 222,353,371, 224,360,379, 225,358,368, 228,352,365, 229,358,368, 231,345,358, 233,340,354,
234,328,340, 237,324,334, 239,328,338, 241,324,337, 243,318,328, 245,308,324, 247,323,338, 249,328,334, 253,323,335, 255,334,344,
258,333,344, 260,334,347, 262,344,354, 264,341,356, 266,331,354, 267,353,359, 268,358,373, 271,366,379, 272,348,368, 273,336,361,
274,327,339, 277,333,351, 279,348,366, 280,368,388, 281,383,399, 282,361,383, 284,345,361, 286,357,374, 288,354,369, 291,361,378,
293,363,382, 294,343,364, 296,331,349, 298,344,358, 299,356,369, 302,354,363, 304,351,364, 306,361,374, 309,371,386, 310,364,386,
312,374,388, 313,371,391, 315,367,381, 317,381,398, 319,381,391, 321,384,399, 323,388,403, 325,373,393, 326,389,411, 328,386,409,
329,361,403, 331,352,371, 332,364,378, 334,371,382, 335,346,382, 336,334,354, 337,341,361, 340,371,388, 341,338,374, 343,343,374,
345,352,374, 347,371,400, 348,356,383, 349,354,374, 351,349,368, 354,359,373, 356,336,363, 357,323,348, 359,319,333, 361,333,352,
363,328,348, 365,338,351, 367,313,338, 370,319,337, 371,294,324, 373,292,306, 374,283,306, 376,263,291, 377,266,280, 378,268,311,
379,308,334, 380,328,352, 381,341,353, 382,319,349, 384,302,329, 385,313,343, 386,324,346, 387,301,328, 388,304,316, 389,311,331,
391,322,338, 393,302,324, 394,311,331, 395,322,337, 396,324,361, 397,348,369, 398,342,383, 399,339,353, 400,354,438, 401,398,435,
402,372,414, 403,361,401, 404,396,423, 405,379,404, 406,387,401, 407,375,401, 408,351,388, 409,349,364, 410,334,367, 411,304,343,
412,278,312, 413,274,293, 414,262,291, 415,260,290, 416,242,274, 417,244,260, 418,219,251, 419,206,229, 420,189,214, 421,177,214,
422,154,179, 423,156,173, 424,161,183, 425,158,194, 426,183,221, 427,184,223, 428,185,230, 429,182,201, 430,185,224, 431,209,241,
432,228,263, 433,218,245, 434,222,258, 435,200,239, 436,201,238, 437,203,238, 438,215,242, 439,191,238, 440,151,199, 441,177,194,
442,177,189, 443,161,195, 444,138,178, 445,111,186, 446,74,127, 447,70,107, 448,84,124, 449,106,135, 450,115,145, 451,97,133,
452,99,118, 453,114,139, 454,130,163, 455,141,158, 456,124,152, 457,139,166, 458,161,204, 459,194,222, 460,201,245, 461,225,240,
462,222,255, 463,236,257, 464,225,246, 465,225,239, 466,213,237, 467,214,229, 468,212,239, 469,207,223, 470,209,231, 471,206,226,
472,206,232, 473,212,232, 474,200,217, 475,189,222, 476,180,200, 477,174,192, 478,135,177, 479,133,164, 480,142,168, 481,127,154,
482,130,148, 483,105,134, 484,106,134, 485,126,169, 486,162,177, 487,168,198, 488,180,204, 489,186,203, 490,188,219, 491,209,231,
492,212,239, 493,230,257, 494,239,263, 495,221,266, 496,185,229, 497,177,194, 498,161,183, 499,148,180, 500,151,178, 501,158,181,
502,151,173, 503,154,194, 504,179,189, 505,186,211, 506,148,198, 507,130,168, 508,120,137, 509,121,137, 510,112,130, 511,106,130,
512,88,115, 513,90,115, 514,102,131, 515,117,157, 516,138,157, 517,126,151, 518,132,148, 519,147,177, 520,168,211, 521,195,214,
522,191,205, 523,194,216, 524,206,223, 525,173,205, 526,176,201, 527,177,194, 528,180,194, 529,180,203, 530,180,205, 531,183,204,
532,185,198, 533,185,204, 534,189,213, 535,197,223, 536,210,228, 537,210,219, 538,213,242, 539,213,229, 540,212,243, 541,209,245,
542,170,210, 543,168,181, 544,156,189, 545,164,199, 546,159,198, 547,192,207, 548,197,228, 549,200,228, 550,192,214, 551,194,209,
552,188,210, 553,181,193, 554,168,187, 555,174,189, 556,153,181, 557,150,174, 558,142,157, 559,129,152, 560,85,133, 561,59,100,
562,79,110, 563,73,95, 564,50,88, 565,43,60, 566,49,71, 567,61,75, 568,58,77, 569,62,77, 570,67,94, 571,81,101,
572,77,101, 573,53,84, 574,55,66, 575,59,84, 576,77,98, 577,41,86, 578,29,50, 579,41,54, 580,37,59, 581,43,74,
582,59,77, 583,44,86, 584,69,82, 585,70,107, 586,73,103, 587,84,101, 588,94,124, 589,109,136, 590,99,130, 591,93,118,
592,109,118, 593,91,112, 594,105,133, 595,105,148, 596,144,154, 597,130,154, 598,135,149, 599,136,151, 600,130,159, 601,143,154,
602,144,165, 603,144,159, 604,133,154, 605,126,142, 606,126,145, 607,118,145, 608,124,149, 609,127,149, 610,143,159, 611,155,181,
612,158,171, 613,145,169, 614,154,167, 615,162,185, 616,169,183, 617,161,184, 618,156,178, 619,132,160, 620,136,151, 621,123,140,
622,129,145, 623,124,145, 624,129,149, 625,150,178, 626,154,171, 627,147,183, 628,147,183, 629,180,186
];

function drawBars() {
let up = '';
let down = '';
let lastMid = 440;
function bar(i, high, low) {
const mid = (high + low) / 2;
const segment = `M${i * 2 + 0.5} ${Math.round(high)}V${Math.round(low)}`;
if (mid < lastMid) up += segment;
else down += segment;
lastMid = mid;
}
for (let k = 0; k < bars.length; k += 3) {
const [i, high, low, next, nextHigh, nextLow] = bars.slice(k, k + 6);
bar(i, high, low);
// bars between two listed ones wobble around the straight line
for (let j = i + 1; j < next; j++) {
const t = (j - i) / (next - i);
const wobble = (j * 7) % 5 - 2;
bar(j, high + (nextHigh - high) * t + wobble, low + (nextLow - low) * t + wobble);
}
}
document.getElementById('candles').innerHTML =
`<path d="M0 183.5H4000" stroke="#778899"/>
<path d="${up}" stroke="#32cd32"/>
<path d="${down}" stroke="#c81e1e"/>
<path d="M1254 0h10l-5 5z" fill="#778899"/>`;
}
drawBars();
```
